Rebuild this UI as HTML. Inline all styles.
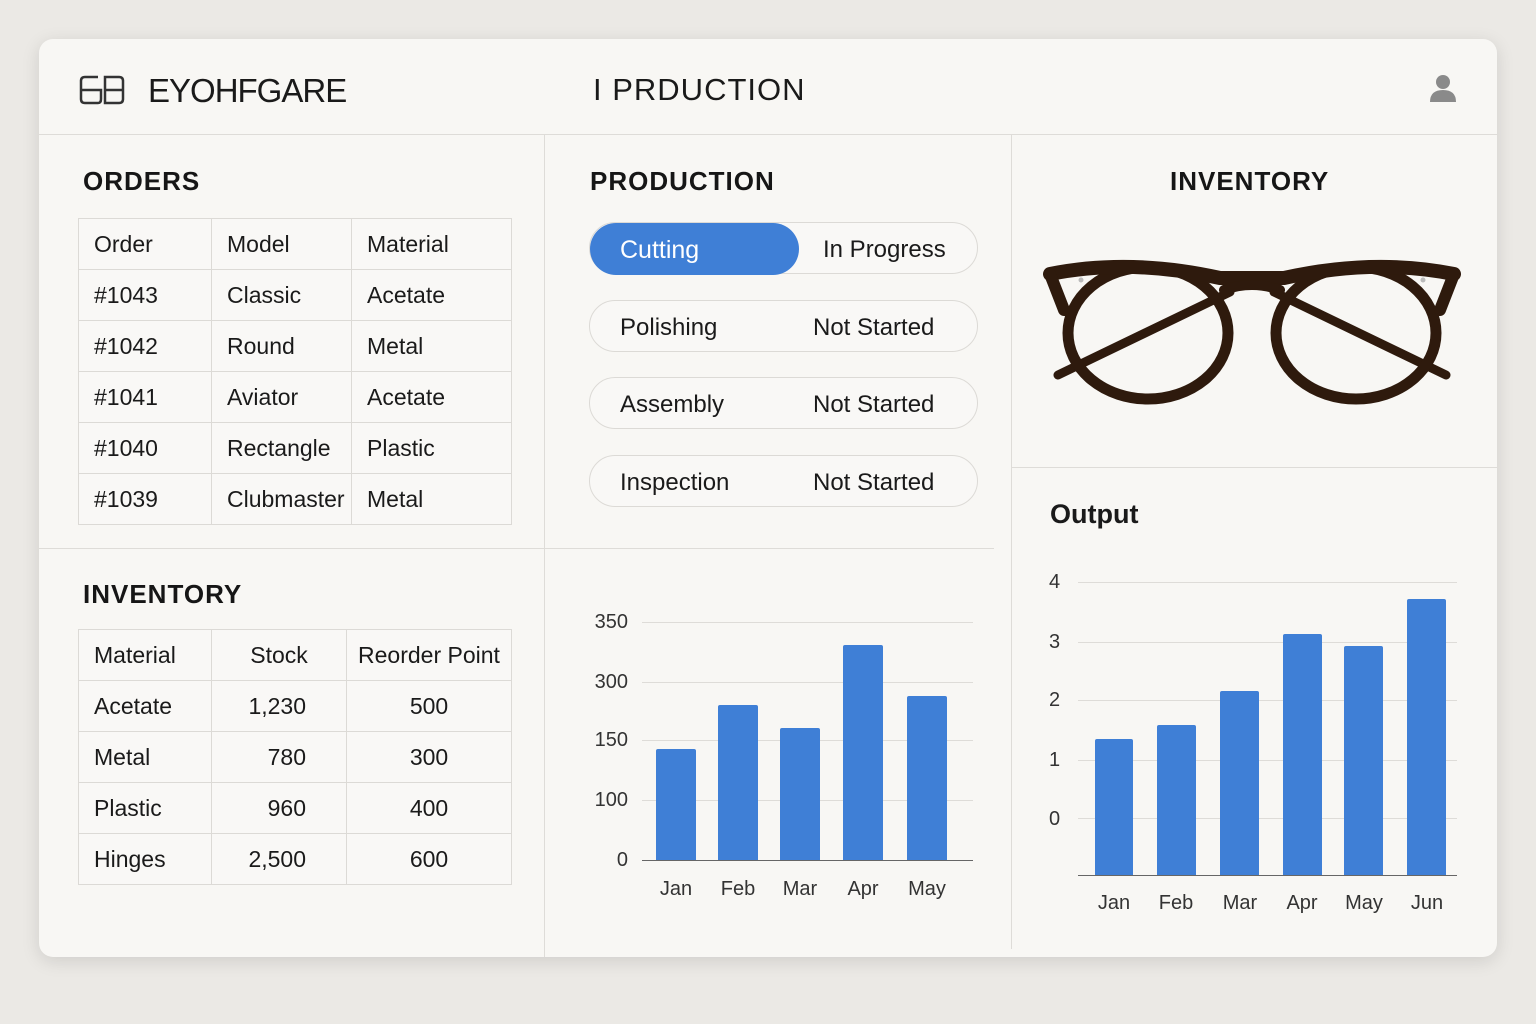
<!DOCTYPE html>
<html><head><meta charset="utf-8"><style>
*{margin:0;padding:0;box-sizing:border-box}
body{width:1536px;height:1024px;background:#ebe9e5;font-family:"Liberation Sans",sans-serif;color:#1a1a1a;position:relative;overflow:hidden}
.card{position:absolute;left:39px;top:39px;width:1458px;height:918px;background:#f8f7f4;border-radius:14px;box-shadow:0 4px 18px rgba(0,0,0,.12)}
.a{position:absolute}
.hl{position:absolute;height:1px;background:#dedcd8}
.vl{position:absolute;width:1px;background:#dedcd8}
h2{position:absolute;font-size:26px;font-weight:bold;letter-spacing:1px;color:#161616}
table{position:absolute;border-collapse:collapse;font-size:23px;background:#f9f8f6}
td{border:1px solid #dcdad6;padding:0 0 0 15px;height:51px;white-space:nowrap}
.pill{position:absolute;left:589px;width:389px;height:52px;border:1px solid #dcdad6;border-radius:26px;background:#f9f8f6;font-size:24px}
.pill span{position:absolute;top:13px}
.bar{position:absolute;background:#3f7fd6;border-radius:2px 2px 0 0}
.lbl{position:absolute;font-size:20px;color:#333}
</style></head><body>
<div class="card"></div>
<svg class="a" style="left:79px;top:75px" width="46" height="30" viewBox="0 0 46 30"><g fill="none" stroke="#333" stroke-width="2.5"><path d="M19 2H6Q2 2 2 6V24Q2 28 6 28H19Q22 28 22 24V15H2"/><path d="M26 15H44V6Q44 2 40 2H26V28H40Q44 28 44 24V15"/></g></svg>
<div class="a" style="left:148px;top:72px;font-size:33px;font-weight:500;letter-spacing:-1px">EYOHFGARE</div>
<div class="a" style="left:593px;top:72px;font-size:31px;letter-spacing:1px">I PRDUCTION</div>
<svg class="a" style="left:1428px;top:72px" width="30" height="32" viewBox="0 0 30 32"><circle cx="15" cy="10" r="7" fill="#8a8a8a"/><path d="M2 30Q2 18 15 18Q28 18 28 30Z" fill="#8a8a8a"/></svg>
<div class="hl" style="left:39px;top:134px;width:1458px"></div>
<div class="vl" style="left:544px;top:134px;height:823px"></div>
<div class="vl" style="left:1011px;top:134px;height:815px"></div>
<div class="hl" style="left:39px;top:548px;width:505px"></div>
<div class="hl" style="left:544px;top:548px;width:450px"></div>
<div class="hl" style="left:1011px;top:467px;width:486px"></div>
<h2 style="left:83px;top:166px">ORDERS</h2>
<table style="left:78px;top:218px;width:434px">
<tr><td style="width:133px">Order</td><td style="width:140px">Model</td><td>Material</td></tr>
<tr><td>#1043</td><td>Classic</td><td>Acetate</td></tr>
<tr><td>#1042</td><td>Round</td><td>Metal</td></tr>
<tr><td>#1041</td><td>Aviator</td><td>Acetate</td></tr>
<tr><td>#1040</td><td>Rectangle</td><td>Plastic</td></tr>
<tr><td>#1039</td><td>Clubmaster</td><td>Metal</td></tr>
</table>
<h2 style="left:83px;top:579px">INVENTORY</h2>
<table style="left:78px;top:629px;width:434px">
<tr><td style="width:133px">Material</td><td style="width:135px;text-align:center;padding:0">Stock</td><td style="text-align:center;padding:0">Reorder Point</td></tr>
<tr><td>Acetate</td><td style="text-align:right;padding-right:40px">1,230</td><td style="text-align:center;padding:0">500</td></tr>
<tr><td>Metal</td><td style="text-align:right;padding-right:40px">780</td><td style="text-align:center;padding:0">300</td></tr>
<tr><td>Plastic</td><td style="text-align:right;padding-right:40px">960</td><td style="text-align:center;padding:0">400</td></tr>
<tr><td>Hinges</td><td style="text-align:right;padding-right:40px">2,500</td><td style="text-align:center;padding:0">600</td></tr>
</table>
<h2 style="left:590px;top:166px">PRODUCTION</h2>
<div class="pill" style="top:222px"><div class="a" style="left:0;top:0;width:209px;height:52px;border-radius:26px;background:#3f7fd6"></div><span style="left:30px;color:#fff;font-size:25px">Cutting</span><span style="left:233px">In Progress</span></div>
<div class="pill" style="top:300px"><span style="left:30px">Polishing</span><span style="left:223px">Not Started</span></div>
<div class="pill" style="top:377px"><span style="left:30px">Assembly</span><span style="left:223px">Not Started</span></div>
<div class="pill" style="top:455px"><span style="left:30px">Inspection</span><span style="left:223px">Not Started</span></div>
<div class="hl" style="left:642px;top:622px;width:331px"></div>
<div class="hl" style="left:642px;top:682px;width:331px"></div>
<div class="hl" style="left:642px;top:740px;width:331px"></div>
<div class="hl" style="left:642px;top:800px;width:331px"></div>
<div class="hl" style="left:642px;top:860px;width:331px;background:#666"></div>
<div class="lbl" style="left:588px;top:611px;width:40px;text-align:right">350</div>
<div class="lbl" style="left:588px;top:671px;width:40px;text-align:right">300</div>
<div class="lbl" style="left:588px;top:729px;width:40px;text-align:right">150</div>
<div class="lbl" style="left:588px;top:789px;width:40px;text-align:right">100</div>
<div class="lbl" style="left:588px;top:849px;width:40px;text-align:right">0</div>
<div class="bar" style="left:656px;top:749px;width:40px;height:111px"></div>
<div class="bar" style="left:718px;top:705px;width:40px;height:155px"></div>
<div class="bar" style="left:780px;top:728px;width:40px;height:132px"></div>
<div class="bar" style="left:843px;top:645px;width:40px;height:215px"></div>
<div class="bar" style="left:907px;top:696px;width:40px;height:164px"></div>
<div class="lbl" style="left:656px;top:878px;width:40px;text-align:center">Jan</div>
<div class="lbl" style="left:718px;top:878px;width:40px;text-align:center">Feb</div>
<div class="lbl" style="left:780px;top:878px;width:40px;text-align:center">Mar</div>
<div class="lbl" style="left:843px;top:878px;width:40px;text-align:center">Apr</div>
<div class="lbl" style="left:907px;top:878px;width:40px;text-align:center">May</div>
<h2 style="left:1170px;top:166px">INVENTORY</h2>
<svg class="a" style="left:1040px;top:250px" width="424" height="160" viewBox="0 0 424 160">
<g fill="none" stroke="#2e1a0d" stroke-linecap="round">
<path d="M190 42L18 125" stroke-width="9"/>
<path d="M234 42L406 125" stroke-width="9"/>
<ellipse cx="108" cy="83" rx="80" ry="66" stroke-width="11"/>
<ellipse cx="316" cy="83" rx="80" ry="66" stroke-width="11"/>
<path d="M10 24Q90 8 180 28L244 28Q334 8 414 24" stroke-width="14"/>
<path d="M10 24L24 60M414 24L400 60" stroke-width="12"/>
<path d="M184 40Q212 30 240 40" stroke-width="10"/>
</g>
<circle cx="41" cy="30" r="2.5" fill="#bbb"/><circle cx="383" cy="30" r="2.5" fill="#bbb"/>
</svg>
<div class="a" style="left:1050px;top:499px;font-size:27px;font-weight:bold">Output</div>
<div class="hl" style="left:1078px;top:582px;width:379px"></div>
<div class="hl" style="left:1078px;top:642px;width:379px"></div>
<div class="hl" style="left:1078px;top:700px;width:379px"></div>
<div class="hl" style="left:1078px;top:760px;width:379px"></div>
<div class="hl" style="left:1078px;top:818px;width:379px"></div>
<div class="hl" style="left:1078px;top:875px;width:379px;background:#666"></div>
<div class="lbl" style="left:1049px;top:571px">4</div>
<div class="lbl" style="left:1049px;top:631px">3</div>
<div class="lbl" style="left:1049px;top:689px">2</div>
<div class="lbl" style="left:1049px;top:749px">1</div>
<div class="lbl" style="left:1049px;top:808px">0</div>
<div class="bar" style="left:1095px;top:739px;width:38px;height:136px"></div>
<div class="bar" style="left:1157px;top:725px;width:39px;height:150px"></div>
<div class="bar" style="left:1220px;top:691px;width:39px;height:184px"></div>
<div class="bar" style="left:1283px;top:634px;width:39px;height:241px"></div>
<div class="bar" style="left:1344px;top:646px;width:39px;height:229px"></div>
<div class="bar" style="left:1407px;top:599px;width:39px;height:276px"></div>
<div class="lbl" style="left:1094px;top:892px;width:40px;text-align:center">Jan</div>
<div class="lbl" style="left:1156px;top:892px;width:40px;text-align:center">Feb</div>
<div class="lbl" style="left:1220px;top:892px;width:40px;text-align:center">Mar</div>
<div class="lbl" style="left:1282px;top:892px;width:40px;text-align:center">Apr</div>
<div class="lbl" style="left:1344px;top:892px;width:40px;text-align:center">May</div>
<div class="lbl" style="left:1407px;top:892px;width:40px;text-align:center">Jun</div>
</body></html>
